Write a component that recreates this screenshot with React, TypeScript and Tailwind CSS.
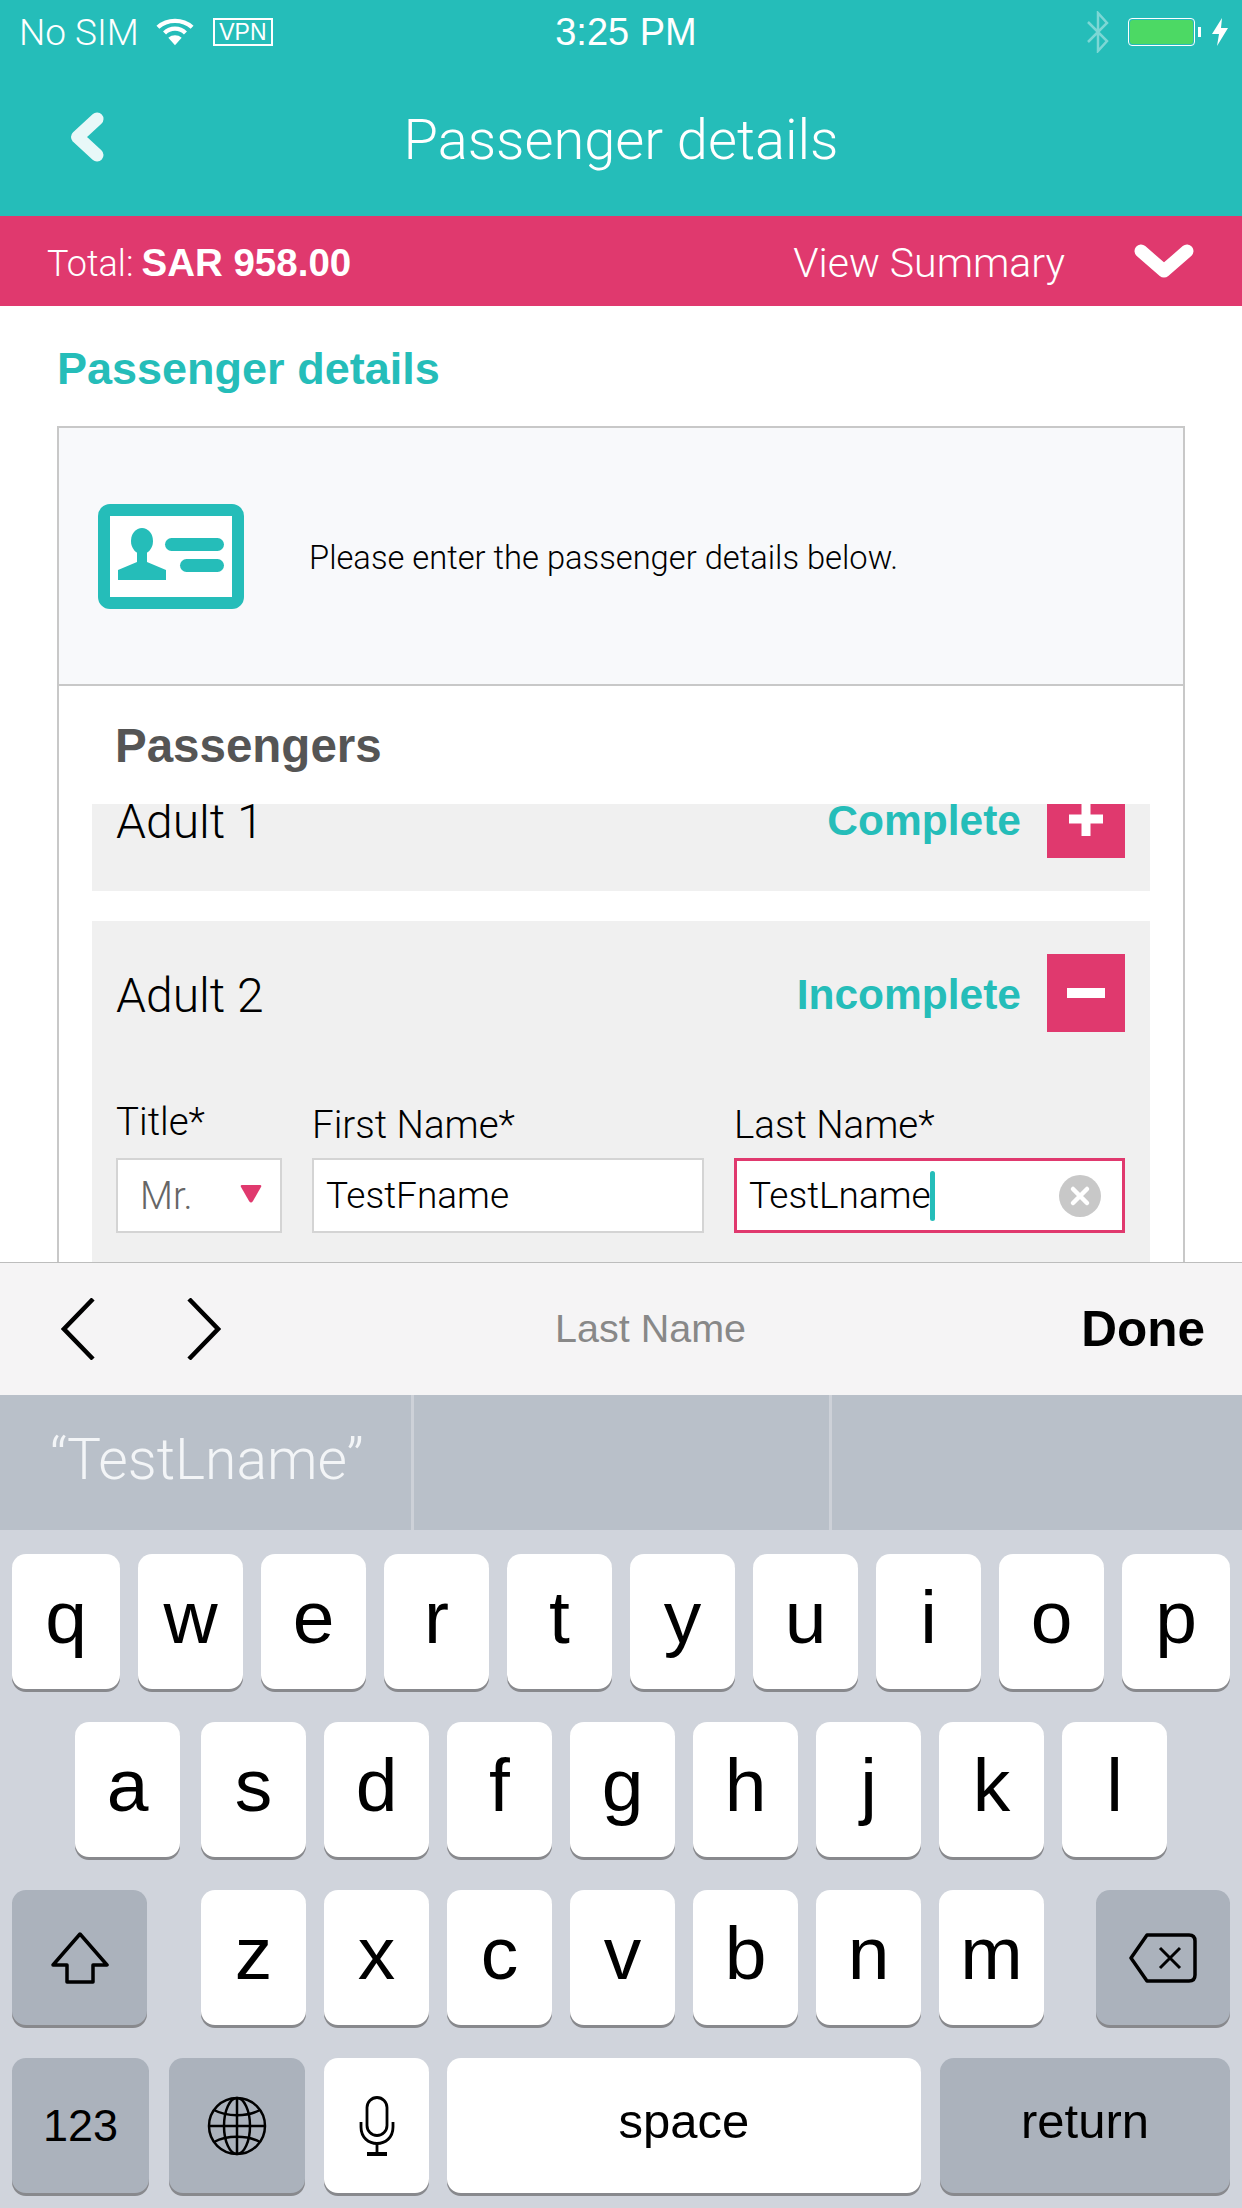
import type { ReactNode } from 'react';

const thin = "font-['Roboto',sans-serif] font-light";

// keyboard key, white unless it is a function key
const Key = ({ children, className = '', dark = false }: { children: ReactNode; className?: string; dark?: boolean }) => (
  <div
    className={`flex h-[135px] items-center justify-center rounded-[14px] text-black shadow-[0_3px_0_#88898d] ${dark ? 'bg-[#abb2bc]' : 'bg-white'} ${className}`}
  >
    {children}
  </div>
);

const Letter = ({ c, className = 'w-[105px]' }: { c: string; className?: string }) => (
  <Key className={className}>
    <span className="-mt-[9px] text-[75px] leading-none">{c}</span>
  </Key>
);

const Field = ({ label, width, labelClass = 'mb-[9px]', children, boxClass }: { label: string; width: string; labelClass?: string; children: ReactNode; boxClass: string }) => (
  <div className={`flex flex-col justify-end ${width}`}>
    <div className={`${thin} text-[38.5px] leading-[48px] text-black ${labelClass}`}>{label}</div>
    <div className={`flex h-[75px] items-center ${boxClass}`}>{children}</div>
  </div>
);

const PassengerHead = ({ name, status, sign }: { name: string; status: string; sign: 'plus' | 'minus' }) => (
  <div className="flex h-[144px] items-center pl-[24px] pr-[25px]">
    <span className={`${thin} pt-[5px] text-[48px] leading-none text-black`}>{name}</span>
    <span className="ml-auto mr-[26px] pt-[5px] text-[42.5px] font-bold leading-none text-[#25bdb9]">{status}</span>
    <div className="flex h-[78px] w-[78px] items-center justify-center bg-[#e0396e]">
      {sign === 'plus' ? (
        <svg width="34" height="34" viewBox="0 0 34 34" fill="#fff">
          <rect x="0" y="12.500" width="34" height="9" />
          <rect x="12.500" y="0" width="9" height="34" />
        </svg>
      ) : (
        <svg width="38" height="10" viewBox="0 0 38 10" fill="#fff">
          <rect width="38" height="10" />
        </svg>
      )}
    </div>
  </div>
);

export default function App() {
  return (
    <div className="flex h-[2208px] w-[1242px] flex-col overflow-hidden bg-white font-['Liberation_Sans',sans-serif]">
      {/* Teal header */}
      <header className="h-[216px] bg-[#25bdb9] text-white">
        <div className="grid h-[62px] grid-cols-[1fr_auto_1fr] items-center pl-[19px] pr-[14px] pt-[2px]">
          <div className="flex items-center">
            <span className={`${thin} text-[37px] leading-none`}>No SIM</span>
            <svg className="ml-[17px]" width="38" height="28" viewBox="0 0 40 28" fill="none" stroke="#fff" strokeWidth="4.5">
              <path d="M2 9 C12 0 28 0 38 9" />
              <path d="M9 15 C15 9 25 9 31 15" />
              <path d="M20 28 L13 20 C17 16.500 23 16.500 27 20 Z" fill="#fff" stroke="none" />
            </svg>
            <div className="ml-[19px] flex h-[28px] w-[60px] items-center justify-center border-2 border-white text-[23px] leading-none">VPN</div>
          </div>
          <span className="pl-[5px] text-[38px] leading-none">3:25 PM</span>
          <div className="flex items-center justify-end">
            <svg className="mr-[18px] opacity-40" width="24" height="42" viewBox="0 0 24 42" fill="none" stroke="#fff" strokeWidth="2.500">
              <path d="M2 11 L21 30 L12 40 V2 L21 12 L2 31" />
            </svg>
            <div className="flex h-[28px] w-[67px] items-center rounded-[4px] border border-white p-[1px]">
              <div className="h-full w-full rounded-[3px] bg-[#4cd964]" />
            </div>
            <div className="ml-[3px] h-[10px] w-[3px] bg-white" />
            <svg className="ml-[11px]" width="16" height="28" viewBox="0 0 16 28" fill="#fff">
              <path d="M10 0 L0 16 H7 L5 28 L16 10 H9 Z" />
            </svg>
          </div>
        </div>
        <div className="relative flex h-[154px] items-center justify-center">
          <svg className="absolute left-[70px] top-[50px]" width="34" height="50" viewBox="0 0 34 50" fill="none" stroke="#e8f8f8" strokeWidth="13" strokeLinecap="round" strokeLinejoin="round">
            <path d="M27 7 L7.500 25 L27 43" />
          </svg>
          <span className={`${thin} mt-[1px] text-[56px] leading-none`}>Passenger details</span>
        </div>
      </header>

      {/* Pink total bar */}
      <div className="flex h-[90px] items-center bg-[#e0396e] pl-[47px] pt-[5px] text-white">
        <span className={`${thin} text-[36px] leading-none`}>Total:</span>
        <span className="ml-[8px] text-[38.5px] font-bold leading-none">SAR 958.00</span>
        <span className={`${thin} ml-auto text-[41px] leading-none`}>View Summary</span>
        <svg className="-mt-[5px] ml-[68px] mr-[47px]" width="62" height="34" viewBox="0 0 62 34" fill="none" stroke="#fff" strokeWidth="13" strokeLinecap="round" strokeLinejoin="round">
          <path d="M8 7 L31 27 L54 7" />
        </svg>
      </div>

      {/* Page content, cut off by the keyboard */}
      <main className="flex h-[956px] flex-col overflow-hidden">
        <h1 className="flex h-[120px] shrink-0 items-center pl-[57px] pt-[4px] text-[45px] font-bold leading-none text-[#25bdb9]">Passenger details</h1>
        <div className="ml-[57px] flex w-[1128px] flex-1 flex-col overflow-hidden border-x-2 border-t-2 border-[#c8c8c8]">
          <div className="flex h-[258px] shrink-0 items-center border-b-2 border-[#c8c8c8] bg-[#f8f9fb] pl-[39px]">
            <svg width="146" height="105" viewBox="0 0 146 105">
              <rect x="6" y="6" width="134" height="93" rx="6" fill="#fff" stroke="#25bdb9" strokeWidth="12" />
              <g fill="#25bdb9">
                <ellipse cx="44" cy="37" rx="11" ry="13" />
                <path d="M39 45 H49 V58 L68 66 V76 H20 V66 L39 58 Z" />
                <rect x="67" y="34" width="59" height="13" rx="6.500" />
                <rect x="82" y="55" width="44" height="13" rx="6.500" />
              </g>
            </svg>
            <p className={`${thin} ml-[65px] pt-[4px] text-[32.7px] leading-none text-black`}>Please enter the passenger details below.</p>
          </div>
          <div className="flex h-[118px] shrink-0 items-center pl-[56px] pt-[2px] text-[47.5px] font-bold leading-none text-[#555555]">Passengers</div>
          <div className="mx-[33px] flex-1 overflow-hidden">
            <div className="-mt-[57px] flex flex-col gap-[30px]">
              <div className="bg-[#f0f0f0]">
                <PassengerHead name="Adult 1" status="Complete" sign="plus" />
              </div>
              <div className="bg-[#f0f0f0] pb-[30px]">
                <PassengerHead name="Adult 2" status="Incomplete" sign="minus" />
                <div className="flex h-[168px] gap-[30px] pl-[24px] pr-[25px]">
                  <Field label="Title*" width="w-[166px]" labelClass="mb-[12px]" boxClass="border-2 border-[#d4d4d4] bg-white pl-[22px] pr-[18px]">
                    <span className={`${thin} text-[38px] leading-none text-[#666666]`}>Mr.</span>
                    <svg className="ml-auto -mt-[4px]" width="22" height="18" viewBox="0 0 22 18" fill="#e0396e">
                      <path d="M2 0 H20 Q22 0 21 2 L13 16 Q11 19 9 16 L1 2 Q0 0 2 0 Z" />
                    </svg>
                  </Field>
                  <Field label="First Name*" width="w-[392px]" boxClass="border-2 border-[#d4d4d4] bg-white pl-[12px]">
                    <span className={`${thin} text-[37px] leading-none text-black`}>TestFname</span>
                  </Field>
                  <Field label="Last Name*" width="flex-1" boxClass="border-[3px] border-[#e0396e] bg-white pl-[12px] pr-[21px]">
                    <span className={`${thin} text-[37px] leading-none text-black`}>TestLname</span>
                    <div className="-ml-[1px] h-[50px] w-[5px] rounded-full bg-[#25bdb9]" />
                    <svg className="ml-auto" width="42" height="42" viewBox="0 0 42 42">
                      <circle cx="21" cy="21" r="21" fill="#c8c8c8" />
                      <path d="M14 14 L28 28 M28 14 L14 28" stroke="#fff" strokeWidth="4.500" strokeLinecap="round" />
                    </svg>
                  </Field>
                </div>
              </div>
            </div>
          </div>
        </div>
      </main>

      {/* Keyboard accessory */}
      <div className="flex h-[133px] items-center border-t border-[#bdbdbd] bg-[#f5f4f5] pl-[61px] pr-[37px]">
        <svg width="34" height="62" viewBox="0 0 34 62" fill="none" stroke="#000" strokeWidth="4.500">
          <path d="M32 1 L3 31 L32 61" />
        </svg>
        <svg className="ml-[92px]" width="34" height="62" viewBox="0 0 34 62" fill="none" stroke="#000" strokeWidth="4.500">
          <path d="M2 1 L31 31 L2 61" />
        </svg>
        <span className="ml-[334px] text-[39.5px] leading-none text-[#888888]">Last Name</span>
        <span className="ml-auto text-[49.5px] font-bold leading-none text-black">Done</span>
      </div>

      {/* Suggestions */}
      <div className="flex h-[135px] bg-[#b9c0c9]">
        <div className={`${thin} flex w-[411px] items-center pb-[6px] pl-[50px] text-[57px] leading-none text-[#f3f5f7]`}>“TestLname”</div>
        <div className="w-[3px] bg-[#cdd1d8]" />
        <div className="w-[415px]" />
        <div className="w-[3px] bg-[#cdd1d8]" />
      </div>

      {/* Keys */}
      <div className="flex flex-1 flex-col gap-[33px] bg-[#d0d4dc] px-[12px] pt-[24px]">
        <div className="flex gap-[18px]">
          <Letter c="q" className="w-[108px]" />
          {['w', 'e', 'r', 't', 'y', 'u', 'i', 'o'].map(c => <Letter key={c} c={c} />)}
          <Letter c="p" className="w-[108px]" />
        </div>
        <div className="flex gap-[18px] pl-[63px]">
          <Letter c="a" className="mr-[3px] w-[105px]" />
          {['s', 'd', 'f', 'g', 'h', 'j', 'k', 'l'].map(c => <Letter key={c} c={c} />)}
        </div>
        <div className="flex gap-[18px]">
          <Key dark className="mr-[36px] w-[135px]">
            <svg width="58" height="52" viewBox="0 0 58 52" fill="none" stroke="#000" strokeWidth="3.500" strokeLinejoin="round">
              <path d="M29 2 L56 33 H42 V50 H16 V33 H2 Z" />
            </svg>
          </Key>
          {['z', 'x', 'c', 'v', 'b', 'n', 'm'].map(c => <Letter key={c} c={c} />)}
          <Key dark className="ml-[34px] w-[134px]">
            <svg width="68" height="50" viewBox="0 0 68 50" fill="none" stroke="#000" strokeWidth="3.500" strokeLinejoin="round">
              <path d="M18 2 H60 Q66 2 66 8 V42 Q66 48 60 48 H18 L2 25 Z" />
              <path d="M31 15 L51 35 M51 15 L31 35" strokeWidth="3" />
            </svg>
          </Key>
        </div>
        <div className="flex gap-[18px]">
          <Key dark className="w-[137px]">
            <span className="text-[45px] leading-none">123</span>
          </Key>
          <Key dark className="ml-[2px] w-[136px]">
            <svg width="60" height="60" viewBox="0 0 60 60" fill="none" stroke="#000" strokeWidth="2.500">
              <circle cx="30" cy="30" r="28" />
              <ellipse cx="30" cy="30" rx="13" ry="28" />
              <path d="M30 2 V58 M2 30 H58" />
              <path d="M7 14 C20 21 40 21 53 14 M7 46 C20 39 40 39 53 46" />
            </svg>
          </Key>
          <Key className="ml-[1px] w-[105px]">
            <svg width="36" height="60" viewBox="0 0 36 60" fill="none" stroke="#000" strokeWidth="2.800">
              <rect x="8" y="1.500" width="20" height="38" rx="10" />
              <path d="M2 26 V31 C2 53 34 53 34 31 V26" />
              <path d="M18 47 V57" />
              <path d="M8 58 H28" strokeWidth="4" />
            </svg>
          </Key>
          <Key className="w-[474px]">
            <span className="-mt-[8px] text-[49px] leading-none">space</span>
          </Key>
          <Key dark className="ml-[1px] flex-1">
            <span className="-mt-[8px] text-[49px] leading-none">return</span>
          </Key>
        </div>
      </div>
    </div>
  );
}
